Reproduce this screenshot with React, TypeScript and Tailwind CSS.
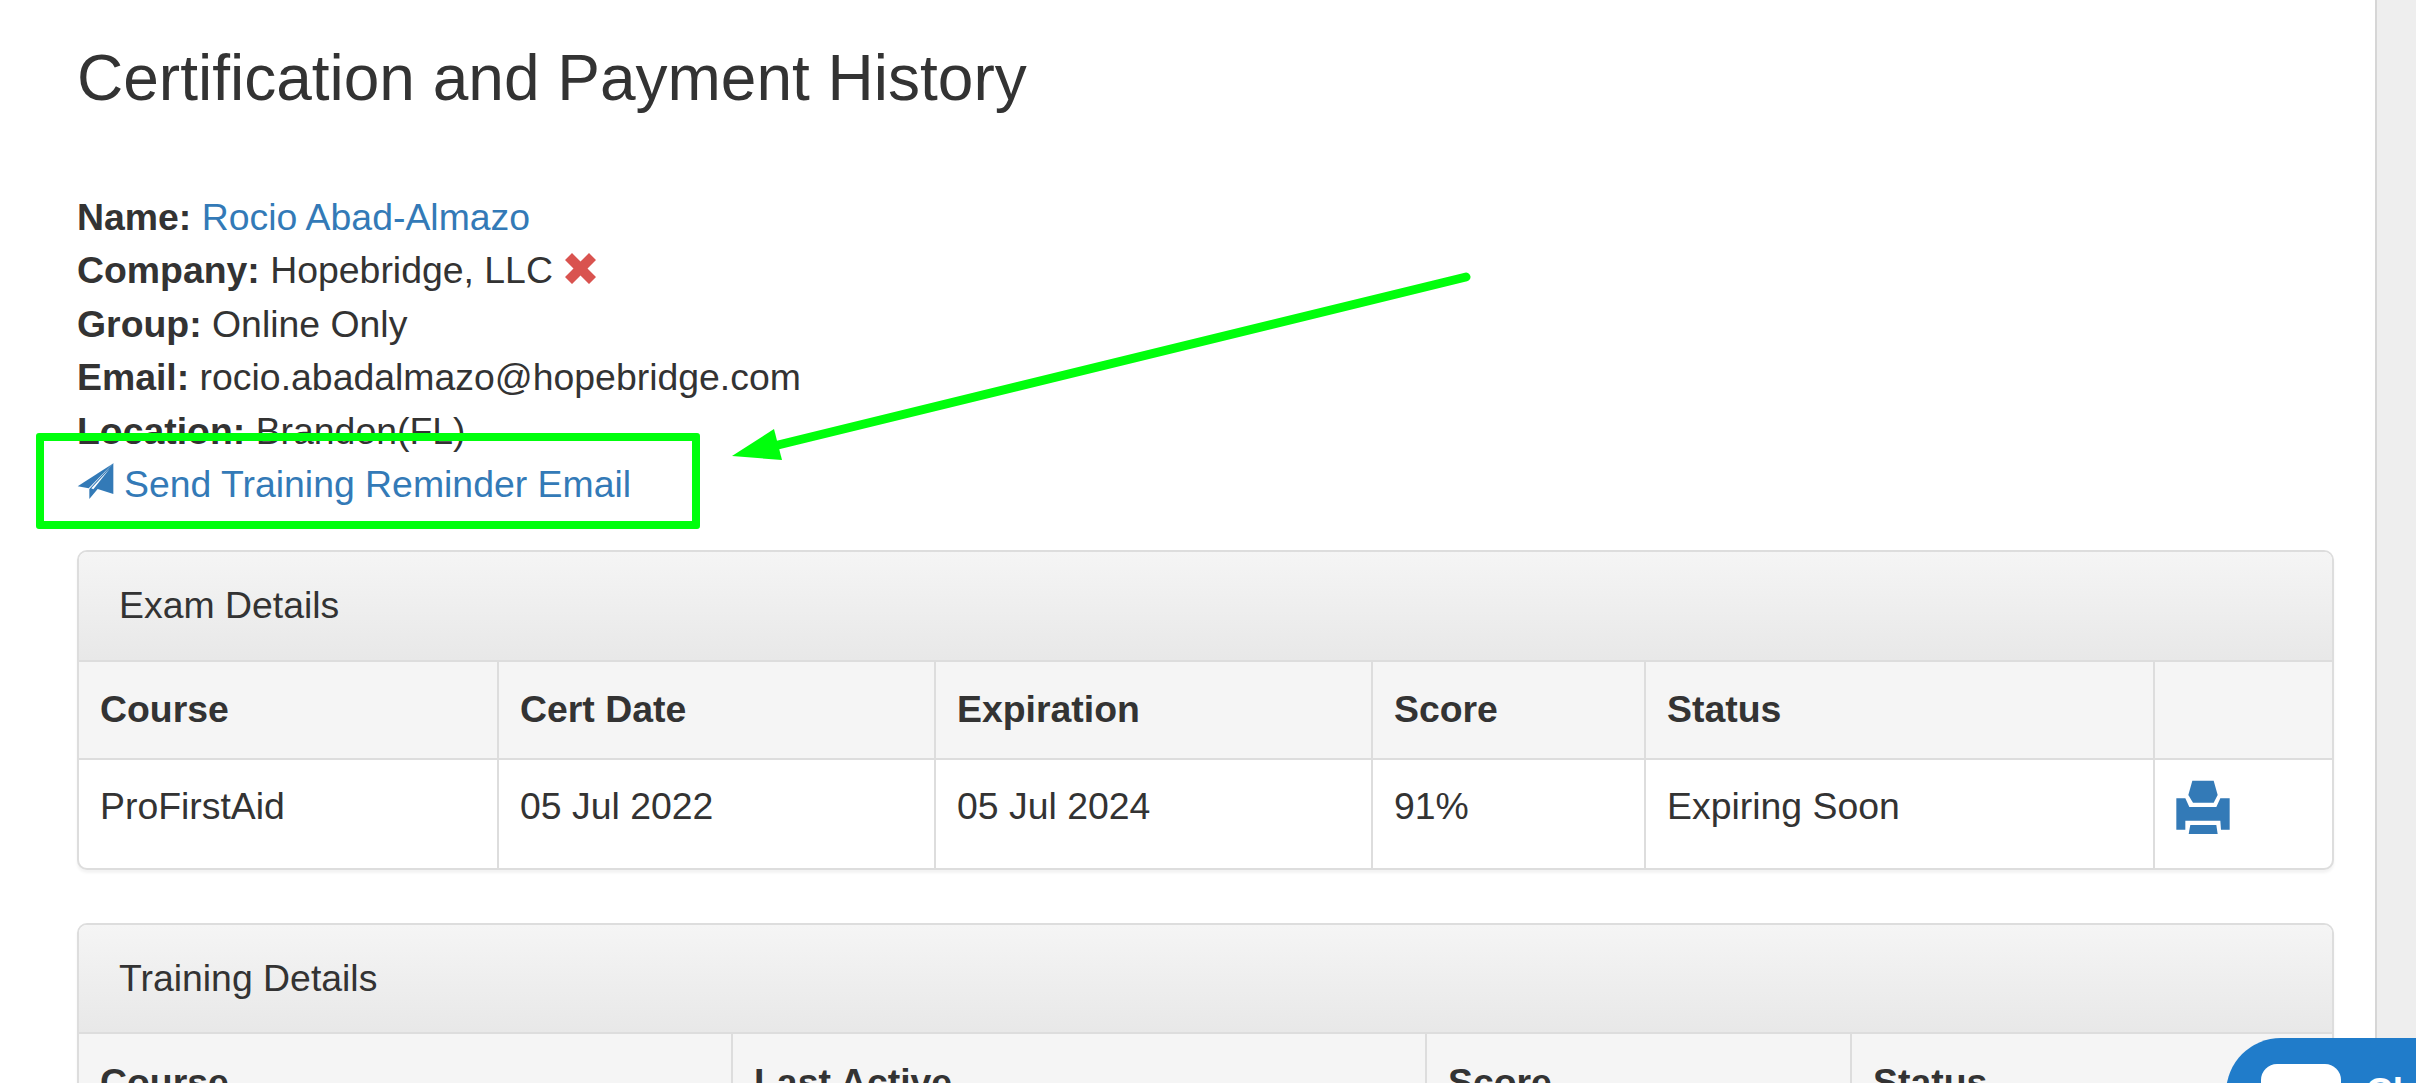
const examRows = [
  { course: "ProFirstAid", certDate: "05 Jul 2022", expiration: "05 Jul 2024", score: "91%", status: "Expiring Soon" },
];

const cellLine = "border-r-2 border-[#ddd] last:border-r-0";

const SendIcon = () => (
  <svg viewBox="25 22 107 108" className="mt-[5px] h-[36px] w-[37px] fill-[#337ab7]">
    <path d="M130 24 L25 92 L58 98 Z" />
    <path d="M132 22 L132 115 L85 100 L60 130 L60 100 Z" />
    <path d="M122 38 L66 98 L72 101 Z" fill="#fff" />
  </svg>
);

const RemoveIcon = () => (
  <svg viewBox="0 0 31 31" className="ml-[2px] inline-block h-[31px] w-[31px] fill-[#d9534f] align-[-1px]">
    <path d="M0 7 L7 0 L15.5 8.5 L24 0 L31 7 L22.5 15.5 L31 24 L24 31 L15.5 22.5 L7 31 L0 24 L8.5 15.5 Z" />
  </svg>
);

const PrintIcon = () => (
  <svg viewBox="528 123 160 162" className="block h-[54px] w-[54px] fill-[#337ab7]">
    <path d="M576 125 L640 125 L652 168 L640 191 L578 191 L564 168 Z" />
    <path d="M528 178 L555 178 L567 204 L648 204 L660 178 L688 178 L688 272 L662 272 L660 245 L555 245 L555 272 L528 272 Z" />
    <path d="M570 258 L648 258 L652 285 L565 285 Z" />
  </svg>
);

const Panel = ({ title, children }: { title: string; children: React.ReactNode }) => (
  <div className="overflow-hidden rounded-[10px] border-2 border-[#ddd] bg-white shadow-[0_3px_3px_rgba(0,0,0,0.05)]">
    <div className="h-[109.5px] border-b-2 border-[#ddd] bg-gradient-to-b from-[#f5f5f5] to-[#e8e8e8] px-[40px] pt-[27px] text-[37.4px] leading-[53px]">
      {title}
    </div>
    {children}
  </div>
);

const App = () => {
  return (
    <div className="relative h-[1083px] overflow-hidden bg-white font-['Liberation_Sans',Arial,sans-serif] text-[37.4px] leading-[53.4px] text-[#333]">
      <div className="absolute top-0 right-0 bottom-0 w-[41px] border-l-2 border-[#d6d6d6] bg-[#eee]" />

      <div className="w-[2334px] pl-[77px]">
        <h1 className="pt-[36px] text-[64px] leading-[84px] font-normal">Certification and Payment History</h1>

        <div className="mt-[71px]">
          <div>
            <b>Name:</b> <a className="text-[#337ab7]">Rocio Abad-Almazo</a>
          </div>
          <div>
            <b>Company:</b> Hopebridge, LLC <RemoveIcon />
          </div>
          <div>
            <b>Group:</b> Online Only
          </div>
          <div>
            <b>Email:</b> rocio.abadalmazo@hopebridge.com
          </div>
          <div>
            <b>Location:</b> Brandon(FL)
          </div>
          <a className="flex h-[53px] items-start gap-[10px] text-[#337ab7]">
            <SendIcon />
            Send Training Reminder Email
          </a>
        </div>

        <div className="mt-[39px]">
          <Panel title="Exam Details">
            <table className="w-full table-fixed border-collapse text-left">
              <colgroup>
                <col className="w-[419px]" />
                <col className="w-[437px]" />
                <col className="w-[437px]" />
                <col className="w-[273px]" />
                <col className="w-[509px]" />
                <col />
              </colgroup>
              <thead>
                <tr className="h-[97px] border-b-2 border-[#ddd] bg-[#f5f5f5]">
                  {["Course", "Cert Date", "Expiration", "Score", "Status", ""].map(h => (
                    <th key={h} className={`${cellLine} px-[21px] font-bold`}>
                      {h}
                    </th>
                  ))}
                </tr>
              </thead>
              <tbody>
                {examRows.map(row => (
                  <tr key={row.course} className="h-[109px]">
                    <td className={`${cellLine} px-[21px] pt-[20px] align-top`}>{row.course}</td>
                    <td className={`${cellLine} px-[21px] pt-[20px] align-top`}>{row.certDate}</td>
                    <td className={`${cellLine} px-[21px] pt-[20px] align-top`}>{row.expiration}</td>
                    <td className={`${cellLine} px-[21px] pt-[20px] align-top`}>{row.score}</td>
                    <td className={`${cellLine} px-[21px] pt-[20px] align-top`}>{row.status}</td>
                    <td className={`${cellLine} px-[21px] pt-[20px] align-top`}>
                      <PrintIcon />
                    </td>
                  </tr>
                ))}
              </tbody>
            </table>
          </Panel>
        </div>

        <div className="mt-[53px]">
          <Panel title="Training Details">
            <table className="w-full table-fixed border-collapse text-left">
              <colgroup>
                <col className="w-[653px]" />
                <col className="w-[694px]" />
                <col className="w-[425px]" />
                <col />
              </colgroup>
              <thead>
                <tr className="h-[98px] border-b-2 border-[#ddd] bg-[#f5f5f5]">
                  {["Course", "Last Active", "Score", "Status"].map(h => (
                    <th key={h} className={`${cellLine} px-[21px] font-bold`}>
                      {h}
                    </th>
                  ))}
                </tr>
              </thead>
            </table>
          </Panel>
        </div>
      </div>

      {/* annotation drawn over the page */}
      <div className="absolute top-[433px] left-[36px] h-[96px] w-[664px] rounded-[3px] border-[8px] border-[#00ff0c]" />
      <svg className="absolute top-0 left-0 h-[1083px] w-[2416px]" viewBox="0 0 2416 1083">
        <path d="M1466 277 L778 445" stroke="#00ff0c" strokeWidth="9" strokeLinecap="round" fill="none" />
        <path d="M732 456 L774 429 L782 460 Z" fill="#00ff0c" />
      </svg>

      {/* chat launcher cut off by the window */}
      <div className="absolute top-[1038px] right-0 flex h-[80px] w-[190px] rounded-tl-[55px] bg-[#207cca] pt-[26px] pl-[35px]">
        <div className="h-[50px] w-[80px] shrink-0 rounded-[16px] bg-white" />
        <span className="mt-[8px] ml-[25px] text-[37px] leading-[40px] font-bold text-white">Chat</span>
      </div>
    </div>
  );
};

export default App;
